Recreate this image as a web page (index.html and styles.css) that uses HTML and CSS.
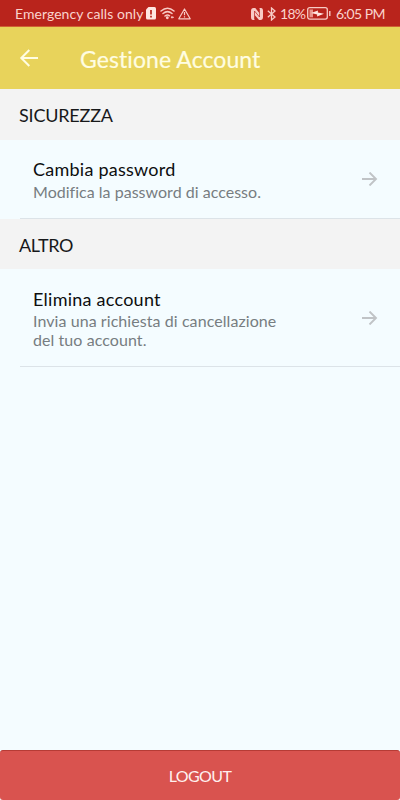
FILE: index.html
```html
<!DOCTYPE html>
<html lang="it">
<head>
<meta charset="utf-8">
<title>Gestione Account</title>
<link rel="stylesheet" href="styles.css">
</head>
<body>
<div class="screen">
  <div class="status">
    <span class="carrier">Emergency calls only</span>
    <svg class="sim" width="10" height="13" viewBox="0 0 10 13"><path d="M2.500 0H8.500Q10 0 10 1.500V11Q10 12.500 8.500 12.500H1.500Q0 12.500 0 11V2.500Z" fill="#ffe6e1"/><path d="M5 3V7.500M5 8.800V10.500" stroke="#b9241c" stroke-width="1.700"/></svg>
    <svg class="wifi" width="16" height="13" viewBox="0 0 16 13" fill="none" stroke="#f8cbc5" stroke-width="1.500" stroke-linecap="round"><path d="M1 4Q7.500-1.500 14 4M3 6.500Q7.500 2.700 12 6.500M5 9Q7.500 7 9.500 8.800"/><circle cx="7.300" cy="10.800" r=".7"/><path d="M12 9.500V11M11.300 10.300H13.500" stroke-width="1"/></svg>
    <svg class="warn" width="13" height="12" viewBox="0 0 13 12" fill="none" stroke="#f8cbc5" stroke-width="1.200" stroke-linejoin="round"><path d="M6.500 1L12.200 10.800H.8ZM6.500 4V7.300M6.500 8.300V9.500"/></svg>
    <span class="spacer"></span>
    <svg class="nfc" width="12" height="12" viewBox="0 0 12 12"><path d="M2.500 0H4.300L8.300 5V0H10Q12 0 12 3V9Q12 12 9.500 12H8L3.700 7V12H2Q0 12 0 9V3Q0 0 2.500 0Z" fill="#f8cbc5"/><path d="M3.500 11.500V3L8.500 9V.5" fill="none" stroke="#b9241c" stroke-width=".7"/></svg>
    <svg class="bt" width="9" height="14" viewBox="0 0 9 14" fill="none" stroke="#f8cbc5" stroke-width="1.300"><path d="M.8 3.800L8 10L4.500 13V1L8 4L.8 10.200"/></svg>
    <span class="percent">18%</span>
    <svg class="battery" width="24" height="13" viewBox="0 0 24 13"><rect x=".7" y=".7" width="19.600" height="11.400" rx="2" fill="none" stroke="#f8cbc5" stroke-width="1.300"/><path d="M2.500 2.500H6V10.300H2.500Z" fill="#e9948b"/><path d="M4 6L11 3.500L10.800 5.500L17 6.700L10 9.500L10.200 7.400Z" fill="#ffe6e1"/><path d="M22.800 4V9" stroke="#f8cbc5" stroke-width="1.400"/></svg>
    <span class="time">6:05 PM</span>
  </div>
  <header class="appbar">
    <svg class="back" width="20" height="20" viewBox="0 0 20 20" fill="none" stroke="#fffde2" stroke-width="2"><path d="M19 10H2.500M10.300 2L2.300 10L10.300 18"/></svg>
    <h1 class="title">Gestione Account</h1>
  </header>
  <h2 class="section">SICUREZZA</h2>
  <div class="row row-password">
    <div class="copy">
      <div class="name">Cambia password</div>
      <div class="desc">Modifica la password di accesso.</div>
    </div>
    <svg class="go" width="16" height="14" viewBox="0 0 16 14" fill="none" stroke="#c0c3c6" stroke-width="1.900"><path d="M0 7H14M7.500 .5L14 7L7.500 13.500"/></svg>
  </div>
  <h2 class="section section-other">ALTRO</h2>
  <div class="row row-delete">
    <div class="copy">
      <div class="name">Elimina account</div>
      <div class="desc desc-delete">Invia una richiesta di cancellazione<br>del tuo account.</div>
    </div>
    <svg class="go" width="16" height="14" viewBox="0 0 16 14" fill="none" stroke="#c0c3c6" stroke-width="1.900"><path d="M0 7H14M7.500 .5L14 7L7.500 13.500"/></svg>
  </div>
  <button class="logout">LOGOUT</button>
</div>
</body>
</html>
```
FILE: styles.css
```css
* { box-sizing: border-box; }
body { margin: 0; font-family: "Lato", "Open Sans", sans-serif; }
.screen { width: 400px; height: 800px; display: flex; flex-direction: column; background: #f4fcff; overflow: hidden; }
.status { height: 27px; flex: none; display: flex; align-items: center; padding: 1px 16px 0 15px; background: #b9241c; border-bottom: 1px solid #cf6033; color: #f9d3cd; font-size: 14px; white-space: nowrap; }
.status svg { flex: none; }
.carrier { width: 131px; letter-spacing: .05px; }
.wifi { margin-left: 4px; }
.warn { margin-left: 2px; }
.spacer { flex: 1; }
.bt { margin-left: 4px; }
.percent { width: 27px; margin-left: 4px; letter-spacing: -.7px; }
.battery { margin-right: 5px; }
.time { width: 48px; letter-spacing: -.55px; }
.appbar { height: 62px; flex: none; display: flex; align-items: center; padding: 0 20px 0 19px; background: #e8d35b; }
.back { margin-top: -1px; }
.title { margin: 0 0 0 41px; font-size: 23px; line-height: 28px; font-weight: 400; color: #fffde2; letter-spacing: .07px; padding-top: 2px; white-space: nowrap; -webkit-text-stroke: .2px #fffde2; }
.section { margin: 0; height: 51px; flex: none; display: flex; align-items: center; padding: 1px 19px 0; background: #f3f3f3; font-size: 18px; line-height: 22px; font-weight: 400; color: #17181a; letter-spacing: -.2px; }
.section-other { height: 50px; letter-spacing: -.35px; }
.row { flex: none; margin-left: 20px; padding: 18px 22px 0 13px; display: flex; justify-content: space-between; border-bottom: 1px solid #dce3e8; white-space: nowrap; }
.row-password { height: 79px; }
.row-delete { height: 98px; padding-top: 19px; }
.name { font-size: 18px; line-height: 22px; color: #0d0e0f; letter-spacing: .25px; }
.desc { margin-top: 3px; font-size: 16px; line-height: 18px; color: #777d81; letter-spacing: .02px; }
.desc-delete { margin-top: 2px; line-height: 18.500px; letter-spacing: .07px; }
.go { flex: none; margin-top: 14px; }
.row-delete .go { margin-top: 23px; }
.logout { margin: auto 0 0; width: 400px; height: 50px; flex: none; border: 0; border-top: 1px solid #b63b35; border-radius: 3px; background: #d9534f; color: #fff0ee; font: 400 16px/20px "Lato", sans-serif; letter-spacing: -.6px; padding: 1px 0 0; }
```
